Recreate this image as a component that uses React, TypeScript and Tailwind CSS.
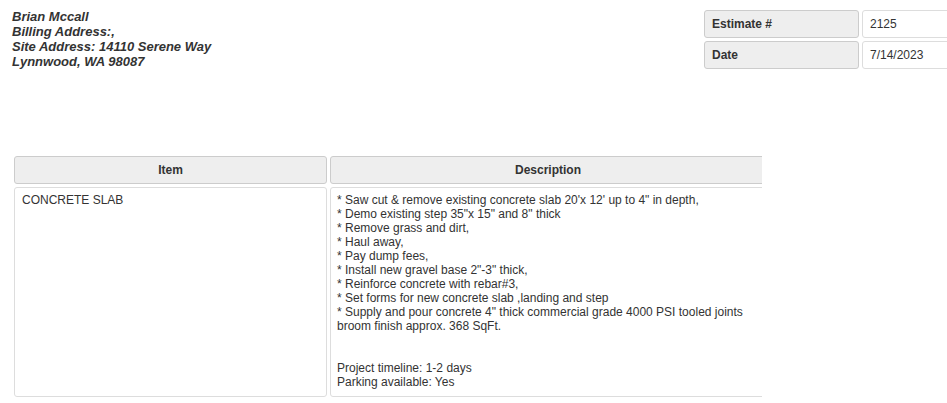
import React from 'react';

const lines = [
  "* Saw cut & remove existing concrete slab 20'x 12' up to 4\" in depth,",
  '* Demo existing step 35"x 15" and 8" thick',
  '* Remove grass and dirt,',
  '* Haul away,',
  '* Pay dump fees,',
  '* Install new gravel base 2"-3" thick,',
  '* Reinforce concrete with rebar#3,',
  '* Set forms for new concrete slab ,landing and step',
  '* Supply and pour concrete 4" thick commercial grade 4000 PSI tooled joints',
  'broom finish approx. 368 SqFt.',
  '',
  '',
  'Project timeline: 1-2 days',
  'Parking available: Yes',
];

function MetaRow({ label, value }: { label: string; value: string }) {
  return (
    <div className="flex gap-[3px]">
      <div className="w-[155px] h-[28px] flex items-center pl-[7px] bg-[#eeeeee] border border-[#cccccc] rounded-[3px] font-bold text-[12px] text-[#333]">
        {label}
      </div>
      <div className="w-[120px] h-[28px] flex items-center pl-[7px] bg-white border border-[#dddddd] rounded-[3px] text-[12px] text-[#333]">
        {value}
      </div>
    </div>
  );
}

export default function App() {
  return (
    <div className="w-[947px] h-[403px] overflow-hidden bg-white text-[#333] font-['Liberation_Sans',Arial,sans-serif]">
      <div className="flex w-[1000px]">
        <div className="w-[704px] shrink-0 pl-[12px] pt-[9px] text-[13px] leading-[15px] font-bold italic text-[#333]">
          <div>Brian Mccall</div>
          <div>Billing Address:,</div>
          <div>Site Address: 14110 Serene Way</div>
          <div>Lynnwood, WA 98087</div>
        </div>
        <div className="pt-[10px] flex flex-col gap-[3px] shrink-0">
          <MetaRow label="Estimate #" value="2125" />
          <MetaRow label="Date" value="7/14/2023" />
        </div>
      </div>

      <div className="mt-[87px] ml-[14px] w-[748px] overflow-hidden">
        <div className="flex gap-[3px] w-[800px]">
          <div className="w-[313px] h-[28px] flex items-center justify-center bg-[#eeeeee] border border-[#cccccc] rounded-[3px] font-bold text-[12px]">
            Item
          </div>
          <div className="w-[450px] h-[28px] flex items-center justify-center pr-[14px] bg-[#eeeeee] border border-[#cccccc] rounded-[3px] font-bold text-[12px]">
            Description
          </div>
        </div>
        <div className="flex gap-[3px] mt-[3px] w-[800px]">
          <div className="w-[313px] h-[210px] pl-[7px] pt-[5px] bg-white border border-[#dddddd] rounded-[3px] text-[12px] leading-[14px]">
            CONCRETE SLAB
          </div>
          <div className="w-[450px] h-[210px] pl-[6px] pt-[5px] bg-white border border-[#dddddd] rounded-[3px] text-[12px] leading-[14px]">
            {lines.map((l, i) => (
              <div key={i} className="h-[14px] whitespace-pre">{l}</div>
            ))}
          </div>
        </div>
      </div>
    </div>
  );
}
